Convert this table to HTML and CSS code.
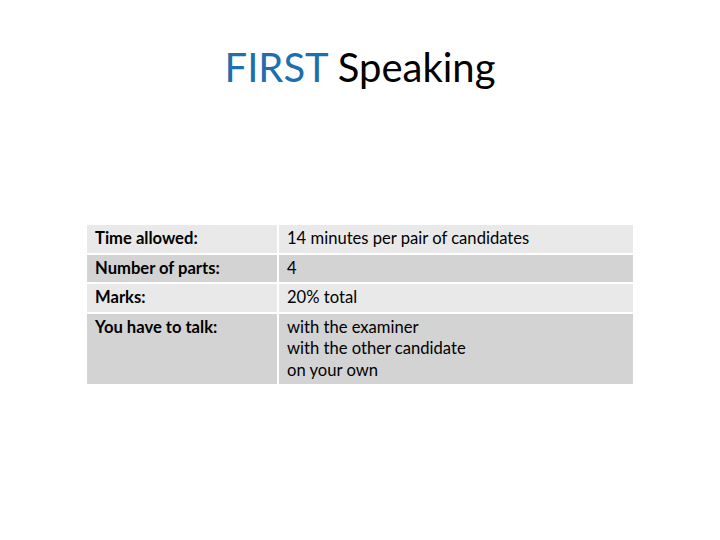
FILE: index.html
```html
<!DOCTYPE html>
<html>
<head>
<meta charset="utf-8">
<link rel="stylesheet" href="styles.css">
</head>
<body>
<div class="slide">
  <h1 class="title"><span class="blue">FIRST</span> Speaking</h1>
  <table class="info">
    <tr class="odd"><td class="label">Time allowed:</td><td>14 minutes per pair of candidates</td></tr>
    <tr class="even"><td class="label">Number of parts:</td><td>4</td></tr>
    <tr class="odd"><td class="label">Marks:</td><td>20% total</td></tr>
    <tr class="even"><td class="label">You have to talk:</td><td>with the examiner<br>with the other candidate<br>on your own</td></tr>
  </table>
</div>
</body>
</html>
```
FILE: styles.css
```css
html, body { margin: 0; padding: 0; background: #fff; }
.slide { width: 720px; height: 540px; font-family: Lato, "Open Sans", sans-serif; color: #000; }
.title { margin: 0; padding-top: 42px; height: 60px; text-align: center; font-weight: normal; font-size: 40px; line-height: 50px; }
.blue { color: #1f6fad; }
.info { margin: 121px 0 0 85px; border-collapse: separate; border-spacing: 2px; width: 550px; font-size: 16.6px; }
.info td { padding: 3px 8px 3px 8px; vertical-align: top; line-height: 21.5px; }
.info td.label { width: 174px; font-weight: bold; }
.odd td { background: #e9e9e9; }
.even td { background: #d3d3d3; }
```
